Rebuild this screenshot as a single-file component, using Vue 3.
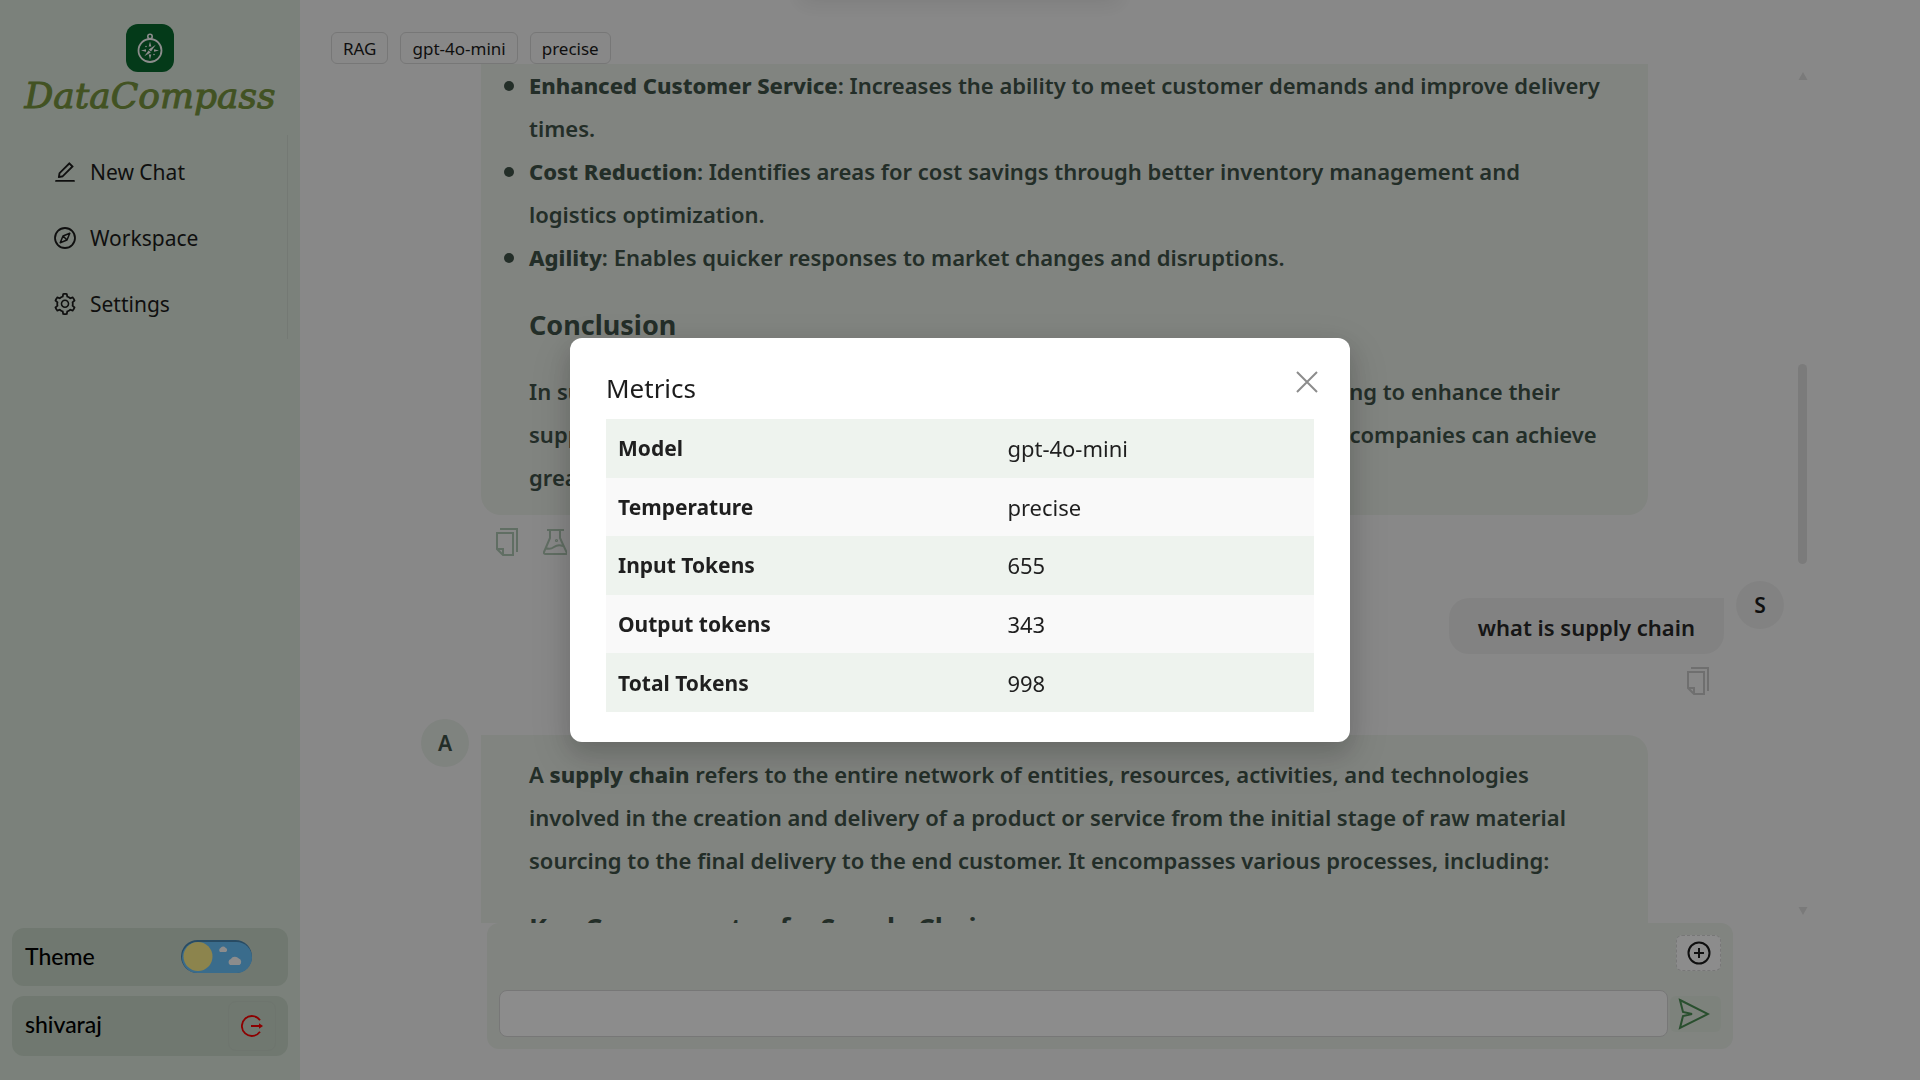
<script setup>
import { ref } from 'vue'

const tags = ['RAG', 'gpt-4o-mini', 'precise']
const metrics = [
  { label: 'Model', value: 'gpt-4o-mini' },
  { label: 'Temperature', value: 'precise' },
  { label: 'Input Tokens', value: '655' },
  { label: 'Output tokens', value: '343' },
  { label: 'Total Tokens', value: '998' },
]
const message = ref('')
const dayTheme = ref(true)
const metricsOpen = ref(true)
</script>

<template>
  <div class="app">
    <aside class="sidebar">
      <div class="brand">
        <svg class="brand-mark" viewBox="0 0 48 48" aria-hidden="true">
          <rect width="48" height="48" rx="12" fill="#086a2e" />
          <g fill="none" stroke="#fff">
            <circle cx="24" cy="26.500" r="11.500" stroke-width="1.800" />
            <circle cx="24" cy="12.500" r="2.200" stroke-width="1.600" />
          </g>
          <g fill="#fff">
            <path d="M24 17.500l1.300 5h-2.600zM24 35.500l1.300-5h-2.600zM15 26.500l5-1.300v2.600zM33 26.500l-5-1.300v2.600z" />
            <path d="M29.800 20.800l-4.800 6.800-2.300-2.200zM18.300 32.200l4.300-5.700 2.200 2z" />
            <circle cx="20" cy="22.500" r=".8" />
            <circle cx="28" cy="30.500" r=".8" />
          </g>
        </svg>
        <span class="brand-name">DataCompass</span>
      </div>

      <nav class="menu">
        <a href="#" class="menu-item">
          <svg viewBox="64 64 896 896" fill="currentColor" aria-hidden="true"><path d="M257.7 752c2 0 4-.2 6-.5L431.9 722c2-.4 3.900-1.300 5.300-2.800l423.900-423.900a9.960 9.960 0 000-14.100L694.900 114.900c-1.900-1.900-4.400-2.900-7.100-2.900s-5.200 1-7.100 2.900L256.800 538.800c-1.500 1.500-2.400 3.300-2.800 5.300l-29.500 168.200a33.500 33.500 0 009.400 29.800c6.600 6.400 14.900 9.900 23.800 9.900zm67.400-174.400L687.800 215l73.300 73.300-362.700 362.600-88.900 15.700 15.600-89zM880 836H144c-17.700 0-32 14.300-32 32v36c0 4.400 3.600 8 8 8h784c4.400 0 8-3.600 8-8v-36c0-17.700-14.300-32-32-32z" /></svg>
          <span>New Chat</span>
        </a>
        <a href="#" class="menu-item">
          <svg viewBox="0 0 22 22" fill="none" stroke="currentColor" aria-hidden="true">
            <circle cx="11" cy="11" r="10" stroke-width="1.800" />
            <path d="M15.800 6.200L13 13l-6.800 2.800L9 9zM9 9l4 4" stroke-width="1.500" stroke-linejoin="round" />
          </svg>
          <span>Workspace</span>
        </a>
        <a href="#" class="menu-item">
          <svg viewBox="64 64 896 896" fill="currentColor" aria-hidden="true"><path d="M924.8 625.7l-65.500-56c3.100-19 4.700-38.400 4.700-57.800s-1.600-38.800-4.700-57.800l65.500-56a32.030 32.030 0 009.300-35.200l-.9-2.600a443.740 443.740 0 00-79.700-137.900l-1.800-2.100a32.120 32.120 0 00-35.100-9.500l-81.300 28.900c-30-24.600-63.500-44-99.700-57.600l-15.700-85a32.050 32.050 0 00-25.800-25.700l-2.700-.5c-52.100-9.400-106.900-9.400-159 0l-2.700.5a32.050 32.050 0 00-25.800 25.700l-15.800 85.400a351.860 351.860 0 00-99 57.400l-81.900-29.100a32 32 0 00-35.100 9.500l-1.800 2.100a446.020 446.020 0 00-79.700 137.900l-.9 2.600c-4.500 12.500-.8 26.500 9.300 35.200l66.300 56.600c-3.100 18.800-4.600 38-4.600 57.100 0 19.200 1.500 38.400 4.600 57.100L99 625.500a32.030 32.030 0 00-9.300 35.200l.9 2.600c18.100 50.400 44.900 96.900 79.700 137.900l1.800 2.100a32.120 32.120 0 0035.100 9.500l81.900-29.100c29.800 24.500 63.100 43.900 99 57.400l15.800 85.400a32.050 32.050 0 0025.800 25.700l2.700.5a449.400 449.400 0 00159 0l2.700-.5a32.050 32.050 0 0025.800-25.700l15.700-85a350 350 0 0099.700-57.600l81.300 28.900a32 32 0 0035.100-9.500l1.800-2.100c34.800-41.100 61.600-87.500 79.700-137.900l.9-2.600c4.500-12.300.8-26.300-9.300-35zM788.300 465.900c2.500 15.100 3.800 30.600 3.800 46.100s-1.300 31-3.800 46.100l-6.600 40.100 74.700 63.900a370.030 370.030 0 01-42.600 73.600L721 702.800l-31.400 25.800c-23.900 19.600-50.500 35-79.300 45.800l-38.100 14.300-17.900 97a377.500 377.500 0 01-85 0l-17.900-97.200-37.800-14.500c-28.500-10.800-55-26.200-78.700-45.700l-31.400-25.900-93.400 33.200c-17-22.900-31.200-47.600-42.600-73.600l75.500-64.500-6.500-40c-2.400-14.900-3.700-30.300-3.700-45.500 0-15.300 1.200-30.600 3.700-45.500l6.500-40-75.500-64.500c11.300-26.100 25.600-50.700 42.600-73.600l93.400 33.200 31.400-25.900c23.700-19.500 50.200-34.900 78.700-45.700l37.900-14.300 17.900-97.200c28.100-3.200 56.800-3.200 85 0l17.900 97 38.100 14.300c28.700 10.800 55.400 26.200 79.300 45.800l31.400 25.800 92.800-32.900c17 22.900 31.200 47.600 42.600 73.600L781.800 426l6.500 39.900zM512 326c-97.200 0-176 78.800-176 176s78.800 176 176 176 176-78.800 176-176-78.800-176-176-176zm79.200 255.200A111.600 111.600 0 01512 614c-29.900 0-58-11.700-79.200-32.800A111.600 111.600 0 01400 502c0-29.900 11.700-58 32.800-79.200C454 401.600 482.100 390 512 390c29.900 0 58 11.600 79.200 32.800A111.600 111.600 0 01624 502c0 29.900-11.700 58-32.800 79.200z" /></svg>
          <span>Settings</span>
        </a>
      </nav>

      <div class="side-foot">
        <div class="side-card theme-card">
          <label for="theme">Theme</label>
          <span class="toggle">
            <input id="theme" v-model="dayTheme" type="checkbox" />
            <svg viewBox="0 0 71 33" aria-hidden="true">
              <rect width="71" height="33" rx="16.500" fill="#4a89b5" />
              <rect x="1" y="2" width="70" height="31" rx="15.500" fill="#6bc5ff" />
              <circle cx="17" cy="16.500" r="14.500" fill="#fff08c" />
              <path d="M39 12a2.500 2.500 0 01.5-4 3 3 0 015-.2 2.300 2.300 0 01.5 4.200zM49 25a3.400 3.400 0 01.8-6 5 5 0 018-.4 3.600 3.600 0 01.8 6.400z" fill="#fff" />
            </svg>
          </span>
        </div>
        <div class="side-card user-card">
          <span class="user-name">shivaraj</span>
          <button class="logout" type="button" aria-label="Log out">
            <svg viewBox="0 0 22 22" fill="none" stroke="#f00" aria-hidden="true">
              <path d="M19 5.200a10 10 0 100 11.600" stroke-width="1.800" />
              <path d="M10 11h9" stroke-width="2" />
              <path d="M18 8.300l4 2.700-4 2.700z" fill="#f00" stroke="none" />
            </svg>
          </button>
        </div>
      </div>
    </aside>

    <main class="main">
      <header class="tags">
        <span v-for="tag in tags" :key="tag" class="tag">{{ tag }}</span>
      </header>

      <section class="chat">
        <div class="messages">
          <article class="bot first">
            <div class="bubble">
              <ul>
                <li><strong>Enhanced Customer Service</strong>: Increases the ability to meet customer demands and improve delivery times.</li>
                <li><strong>Cost Reduction</strong>: Identifies areas for cost savings through better inventory management and logistics optimization.</li>
                <li><strong>Agility</strong>: Enables quicker responses to market changes and disruptions.</li>
              </ul>
              <h3>Conclusion</h3>
              <p>In summary, supply chain optimization is essential for all organizations looking to enhance their supply chain performance. By leveraging insights and modern technologies, companies can achieve greater efficiency.</p>
            </div>
            <div class="actions">
              <button type="button" aria-label="Copy">
                <svg viewBox="0 0 24 30" fill="none" stroke="currentColor" stroke-width="2" aria-hidden="true">
                  <path d="M5 2h17v23M2 6h16v22H8l-6-6zM2 22h6v6" />
                </svg>
              </button>
              <button type="button" aria-label="Metrics">
                <svg viewBox="0 0 24 30" fill="none" stroke="currentColor" stroke-width="2" stroke-linejoin="round" aria-hidden="true">
                  <path d="M4 3h17M7 3v8L1 25q-.5 2 1.500 2h20q2 0 1-2L17 11V3M3 21q4 2 8-1t9-1" />
                  <circle cx="13.500" cy="13.500" r=".6" />
                </svg>
              </button>
            </div>
          </article>

          <article class="user">
            <div class="user-line">
              <div class="user-bubble">what is supply chain</div>
              <div class="avatar">S</div>
            </div>
            <div class="actions">
              <button type="button" aria-label="Copy">
                <svg viewBox="0 0 24 30" fill="none" stroke="currentColor" stroke-width="2" aria-hidden="true">
                  <path d="M5 2h17v23M2 6h16v22H8l-6-6zM2 22h6v6" />
                </svg>
              </button>
            </div>
          </article>

          <article class="bot second">
            <div class="avatar bot-avatar">A</div>
            <div class="bubble">
              <p>A <strong>supply chain</strong> refers to the entire network of entities, resources, activities, and technologies involved in the creation and delivery of a product or service from the initial stage of raw material sourcing to the final delivery to the end customer. It encompasses various processes, including:</p>
              <h3>Key Components of a Supply Chain</h3>
            </div>
          </article>
        </div>
        <div class="scrollbar" aria-hidden="true">
          <svg viewBox="0 0 10 8"><path d="M5 0l4.500 8h-9z" fill="currentColor" /></svg>
          <div class="thumb"></div>
          <svg viewBox="0 0 10 8"><path d="M5 8L.5 0h9z" fill="currentColor" /></svg>
        </div>
      </section>

      <form class="composer" @submit.prevent>
        <button class="attach" type="button" aria-label="Add">
          <svg viewBox="0 0 24 24" fill="none" stroke="currentColor" stroke-width="2" aria-hidden="true">
            <circle cx="12" cy="12" r="10.500" /><path d="M12 7v10M7 12h10" />
          </svg>
        </button>
        <div class="composer-row">
          <input v-model="message" type="text" aria-label="Message" />
          <button class="send" type="submit" aria-label="Send">
            <svg viewBox="0 0 32 32" fill="none" stroke="#4b9055" stroke-width="2" aria-hidden="true">
              <path d="M2 2l28 14L2 30l3-12 9-2-9-2z" />
            </svg>
          </button>
        </div>
      </form>
    </main>

    <div class="toast" aria-hidden="true"></div>

    <div v-if="metricsOpen" class="overlay">
      <section class="modal" role="dialog" aria-modal="true" aria-labelledby="metrics-title">
        <header class="modal-head">
          <h2 id="metrics-title">Metrics</h2>
          <button type="button" aria-label="Close" @click="metricsOpen = false">
            <svg viewBox="0 0 22 22" fill="none" stroke="currentColor" stroke-width="2" aria-hidden="true">
              <path d="M1 1l20 20M21 1L1 21" />
            </svg>
          </button>
        </header>
        <table>
          <tbody>
            <tr v-for="row in metrics" :key="row.label">
              <th scope="row">{{ row.label }}</th>
              <td>{{ row.value }}</td>
            </tr>
          </tbody>
        </table>
      </section>
    </div>
  </div>
</template>

<style>
body {
  background: #f8f8f8;
}
</style>

<style scoped>
* {
  box-sizing: border-box;
}
.app {
  display: flex;
  height: 100vh;
  overflow: hidden;
  color: #1c1c1c;
  font-family: "Noto Sans", "Open Sans", sans-serif;
}
button {
  display: grid;
  place-items: center;
  padding: 0;
  border: 0;
  background: none;
  color: inherit;
  font: inherit;
  cursor: pointer;
}
svg {
  display: block;
}
h2,
h3,
p,
ul {
  margin: 0;
}
strong {
  font-weight: 800;
}

.sidebar {
  display: flex;
  flex: 0 0 300px;
  flex-direction: column;
  padding: 24px 12px;
  background: #e0ece0;
}
.brand {
  display: flex;
  flex-direction: column;
  align-items: center;
}
.brand-mark {
  width: 48px;
  height: 48px;
}
.brand-name {
  color: #78963f;
  font: italic 36px/48px "DejaVu Serif", serif;
  -webkit-text-stroke: 1px #78963f;
}
.menu {
  margin-top: 15px;
  padding: 4px 0 2px;
  border-right: 1px solid #d3ddd3;
}
.menu-item {
  display: flex;
  align-items: center;
  gap: 14px;
  height: 66px;
  padding-left: 42px;
  color: inherit;
  font-size: 21px;
  line-height: 30px;
  text-decoration: none;
}
.menu-item svg {
  width: 22px;
  height: 22px;
}
.side-foot {
  display: flex;
  flex-direction: column;
  gap: 10px;
  margin-top: auto;
}
.side-card {
  display: flex;
  align-items: center;
  justify-content: space-between;
  height: 58px;
  padding: 0 36px 0 13px;
  border-radius: 12px;
  background: #ccdacc;
  color: #000;
  font: 500 23px/28px Lato, sans-serif;
}
.theme-card {
  padding-bottom: 2px;
}
.user-card {
  height: 60px;
  padding-right: 12px;
}
.user-name {
  padding-bottom: 4px;
}
.toggle {
  position: relative;
  width: 71px;
  height: 33px;
}
.toggle input {
  position: absolute;
  inset: 0;
  margin: 0;
  opacity: 0;
}
.logout {
  width: 48px;
  height: 50px;
  border: 1px solid #c8d6c8;
  border-radius: 8px;
}
.logout svg {
  width: 22px;
  height: 22px;
}

.main {
  display: flex;
  flex: 1;
  flex-direction: column;
  min-width: 0;
  padding: 32px 0 31px;
}
.tags {
  display: flex;
  gap: 12px;
  padding-left: 31px;
}
.tag {
  height: 32px;
  padding: 0 11px;
  border: 1px solid #d9d9d9;
  border-radius: 6px;
  font-size: 17px;
  line-height: 31px;
}
.chat {
  display: flex;
  flex: 1;
  gap: 14px;
  min-height: 0;
  padding: 0 112px 0 121px;
  overflow: hidden;
}
.messages {
  flex: 1;
  min-width: 0;
}
.bot {
  padding: 0 136px 0 60px;
  color: #41544a;
}
.bubble {
  padding: 18px 40px 16px 48px;
  border-radius: 0 20px 20px 20px;
  background: #ebf0e9;
  font-size: 22px;
  font-weight: 600;
  line-height: 43px;
}
.first .bubble {
  padding-top: 0;
  border-top-right-radius: 0;
}
.bubble ul {
  padding: 0;
  list-style: none;
}
.bubble li {
  position: relative;
}
.bubble li::before {
  position: absolute;
  top: 17px;
  left: -25px;
  width: 10px;
  height: 10px;
  border-radius: 50%;
  background: currentColor;
  content: "";
}
.bubble h3 {
  margin: 24px 0;
  font-size: 27px;
  font-weight: 700;
  line-height: 43px;
}
.actions {
  display: flex;
  align-items: flex-start;
  gap: 24px;
  height: 54px;
  padding: 12px 0 0 14px;
  color: #b0c8b4;
}
.actions svg {
  width: 24px;
  height: 30px;
}
.user {
  margin-top: 12px;
}
.user-line {
  display: flex;
  justify-content: flex-end;
  gap: 12px;
}
.user-bubble {
  height: 56px;
  margin-top: 17px;
  padding: 0 29px;
  border-radius: 20px 0 20px 20px;
  background: #ededed;
  color: #282828;
  font-size: 22px;
  font-weight: 600;
  line-height: 58px;
}
.user .actions {
  justify-content: flex-end;
  height: 65px;
  padding-right: 74px;
  color: #cacaca;
}
.avatar {
  width: 48px;
  height: 48px;
  border-radius: 50%;
  background: #ededed;
  font-size: 21px;
  font-weight: 600;
  line-height: 48px;
  text-align: center;
}
.second {
  display: flex;
  gap: 12px;
  padding-left: 0;
}
.second .bubble {
  flex: 1;
  margin-top: 16px;
}
.bot-avatar {
  background: #e8eee8;
}
.scrollbar {
  display: flex;
  flex-direction: column;
  justify-content: space-between;
  width: 10px;
  padding: 8px 0;
  color: #dedede;
}
.scrollbar svg {
  width: 10px;
  height: 8px;
}
.thumb {
  width: 9px;
  height: 200px;
  margin-bottom: 60px;
  border-radius: 5px;
  background: #e0e0e0;
}
.composer {
  display: flex;
  flex-direction: column;
  align-items: flex-end;
  gap: 19px;
  margin: 0 187px;
  padding: 12px;
  border-radius: 12px;
  background: #ebf0e9;
}
.attach {
  width: 45px;
  height: 36px;
  border: 1px dashed #d9d9d9;
  border-radius: 6px;
  background: #fff;
}
.attach svg {
  width: 24px;
  height: 24px;
}
.composer-row {
  display: flex;
  align-items: center;
  gap: 2px;
  width: 100%;
}
.composer-row input {
  flex: 1;
  min-width: 0;
  height: 47px;
  padding: 0 16px;
  border: 1px solid #d9d9d9;
  border-radius: 8px;
  background: #fff;
  font: inherit;
  font-size: 20px;
}
.send {
  width: 51px;
  height: 36px;
  border-radius: 6px;
  background: #e4ede2;
}
.send svg {
  width: 32px;
  height: 32px;
  margin-right: 4px;
}

/* message banner parked above the window; only its shadow shows */
.toast {
  position: fixed;
  bottom: 100%;
  left: 50%;
  width: 320px;
  height: 40px;
  margin-left: -160px;
  box-shadow: 0 4px 20px rgba(0, 0, 0, 0.08);
}
.overlay {
  position: fixed;
  inset: 0;
  display: grid;
  place-items: center;
  background: rgba(0, 0, 0, 0.45);
}
.modal {
  width: 780px;
  max-width: 90%;
  padding: 31px 36px 30px;
  border-radius: 12px;
  background: #fff;
  box-shadow: 0 9px 24px rgba(0, 0, 0, 0.16), 0 14px 42px 12px rgba(0, 0, 0, 0.08);
}
.modal-head {
  display: flex;
  justify-content: space-between;
  height: 50px;
}
.modal-head h2 {
  font-size: 26px;
  font-weight: 400;
  line-height: 39px;
}
.modal-head button {
  width: 36px;
  height: 26px;
  margin-right: -11px;
  color: #8c8c8c;
}
.modal-head svg {
  width: 22px;
  height: 22px;
}
table {
  width: 100%;
  height: 293px;
  border-collapse: collapse;
  font-size: 22px;
}
tr {
  background: #f9f9f9;
}
tr:nth-child(odd) {
  background: #eef3ee;
}
th,
td {
  padding: 0 12px;
  color: #1f1f1f;
  text-align: left;
}
th {
  width: 55%;
  font-size: 21px;
  font-weight: 700;
}
td {
  font-weight: 400;
}
</style>
